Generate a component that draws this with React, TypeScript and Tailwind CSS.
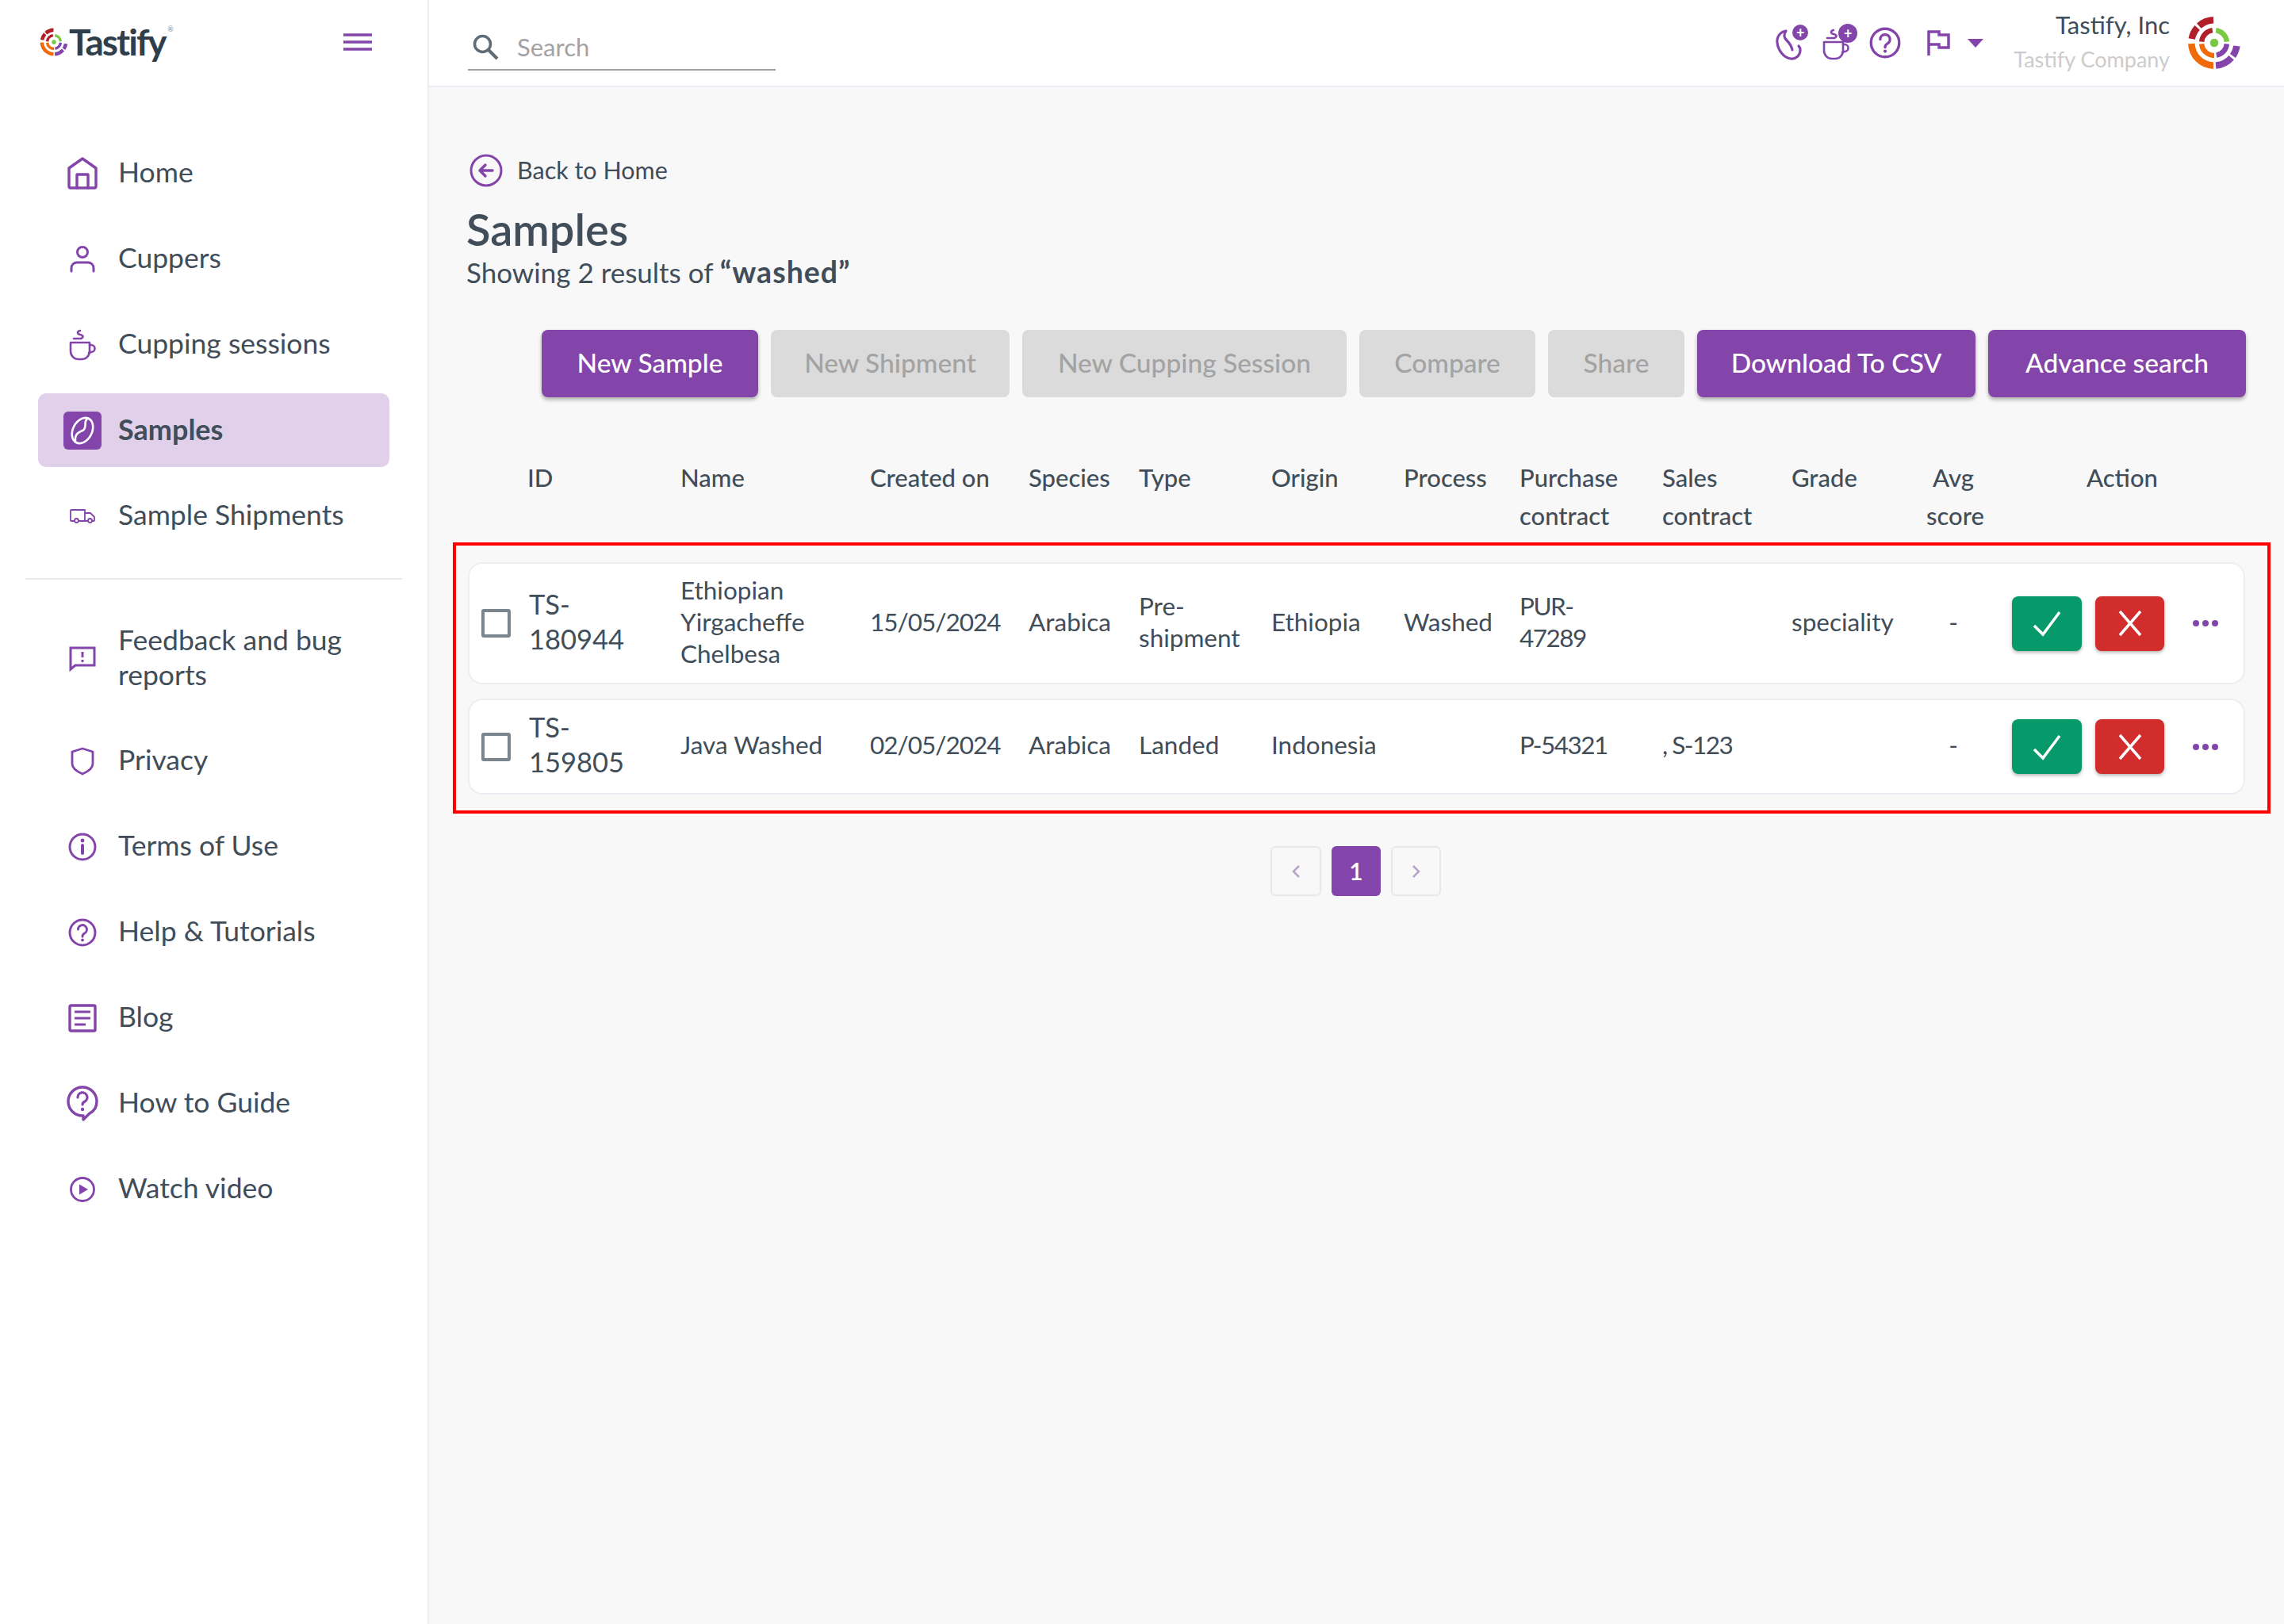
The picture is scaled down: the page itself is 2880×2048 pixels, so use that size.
import React from "react";

const P = "#8445ab";

function arc(cx: number, cy: number, r: number, a0: number, a1: number) {
  const rad = (d: number) => ((d - 90) * Math.PI) / 180;
  const x0 = cx + r * Math.cos(rad(a0));
  const y0 = cy + r * Math.sin(rad(a0));
  const x1 = cx + r * Math.cos(rad(a1));
  const y1 = cy + r * Math.sin(rad(a1));
  return `M${x0} ${y0}A${r} ${r} 0 ${a1 - a0 > 180 ? 1 : 0} 1 ${x1} ${y1}`;
}

function LogoMark({ size }: { size: number }) {
  const segs: [number, number, number, string, number][] = [
    [27, 280, 312, "#b01f2a", 8],
    [27, 318, 358, "#b01f2a", 8],
    [27, 98, 125, "#8445ab", 8],
    [27, 131, 176, "#8445ab", 8],
    [27, 182, 268, "#f06a0a", 8],
    [15, 275, 352, "#b01f2a", 6],
    [15, 8, 85, "#7ac943", 6],
    [15, 95, 170, "#8445ab", 6],
    [15, 180, 265, "#f06a0a", 6],
  ];
  return (
    <svg width={size} height={size} viewBox="0 0 64 64">
      {segs.map((s, i) => (
        <path key={i} d={arc(32, 32, s[0], s[1], s[2])} fill="none" stroke={s[3]} strokeWidth={s[4]} />
      ))}
      <circle cx="32" cy="32" r="5" fill="#7ac943" />
    </svg>
  );
}

const S = { fill: "none", stroke: P, strokeWidth: 2, strokeLinejoin: "round" as const, strokeLinecap: "round" as const };

function IHome() {
  return (
    <svg width="40" height="42" viewBox="0 0 40 42">
      <path {...S} strokeWidth={3.4} d="M20 2 3 14v23a2 2 0 0 0 2 2h30a2 2 0 0 0 2-2V14Z" />
      <path {...S} strokeWidth={3.4} d="M13 39V22h14v17" />
    </svg>
  );
}
function IUser() {
  return (
    <svg width="32" height="34" viewBox="0 0 32 34">
      <circle {...S} strokeWidth={3} cx="16" cy="8" r="6.5" />
      <path {...S} strokeWidth={3} d="M2 32v-4a7 7 0 0 1 7-7h14a7 7 0 0 1 7 7v4" />
    </svg>
  );
}
function ICup() {
  return (
    <svg width="34" height="40" viewBox="0 0 34 40">
      <path {...S} strokeWidth={2.6} d="M2 17h24v11a10 10 0 0 1-10 10h-4A10 10 0 0 1 2 28Z" />
      <path {...S} strokeWidth={2.6} d="M26 20h2a4 4 0 0 1 0 9l-3 1" />
      <path {...S} strokeWidth={2.6} d="M14 2c-4 1-4 4 0 5s5 3 1 5H6" />
    </svg>
  );
}
function IBean() {
  return (
    <svg width="36" height="40" viewBox="0 0 36 40">
      <g transform="rotate(28 18 20)">
        <ellipse cx="18" cy="20" rx="12" ry="17" fill="none" stroke="#fff" strokeWidth="2.600" />
        <path d="M17 3c-5 6 6 11 1 17s-6 10-1 17" fill="none" stroke="#fff" strokeWidth="2.600" />
      </g>
    </svg>
  );
}
function IBeanOpen() {
  return (
    <svg width="36" height="44" viewBox="0 0 36 44">
      <path
        d="M14 4C7 5 2 11 3 19c1 9 8 19 17 20 6 1 12-4 12-11 0-2-1-4-2-5M14 4c-3 5-3 8 1 12 3 3 6 7 7 12"
        fill="none"
        stroke={P}
        strokeWidth="3.200"
        strokeLinecap="round"
      />
    </svg>
  );
}
function ITruck() {
  return (
    <svg width="32" height="18" viewBox="0 0 32 18">
      <path {...S} strokeWidth={1.8} d="M6 15H2a1 1 0 0 1-1-1V2a1 1 0 0 1 1-1h17v14H11M19 5h7l5 5v4a1 1 0 0 1-1 1h-2M23 15h-4" />
      <circle {...S} strokeWidth={1.8} cx="8.5" cy="14.5" r="2.5" />
      <circle {...S} strokeWidth={1.8} cx="25.5" cy="14.5" r="2.5" />
    </svg>
  );
}
function IFeedback() {
  return (
    <svg width="34" height="34" viewBox="0 0 34 34">
      <path {...S} strokeWidth={3} d="M2 3h30v22H8l-6 5Z" strokeLinejoin="miter" />
      <path d="M17 8v7M17 18v3" stroke={P} strokeWidth={3} />
    </svg>
  );
}
function IShield() {
  return (
    <svg width="30" height="36" viewBox="0 0 30 36">
      <path {...S} strokeWidth={2.8} d="M15 2 2 6v15c0 5 6 10 13 13 7-3 13-8 13-13V6Z" />
    </svg>
  );
}
function IInfo() {
  return (
    <svg width="36" height="36" viewBox="0 0 36 36">
      <circle {...S} strokeWidth={3} cx="18" cy="18" r="16" />
      <path d="M18 16v10" stroke={P} strokeWidth={4} strokeLinecap="round" />
      <circle cx="18" cy="10" r="2.4" fill={P} />
    </svg>
  );
}
function IHelp({ s = 36, sw = 3 }: { s?: number; sw?: number }) {
  return (
    <svg width={s} height={s} viewBox="0 0 36 36">
      <circle {...S} strokeWidth={sw} cx="18" cy="18" r="16" />
      <path {...S} strokeWidth={sw} d="M12.5 14a5.5 5.5 0 1 1 8 5c-1.800 1-2.500 2-2.500 4" strokeLinejoin="round" />
      <circle cx="18" cy="27.500" r="1.900" fill={P} />
    </svg>
  );
}
function IBlog() {
  return (
    <svg width="36" height="36" viewBox="0 0 36 36">
      <rect {...S} strokeWidth={3.4} x="2" y="2" width="32" height="32" rx="1.500" />
      <path d="M8 10h20M8 18h20M8 26h14" stroke={P} strokeWidth={3} />
    </svg>
  );
}
function IGuide() {
  return (
    <svg width="40" height="46" viewBox="0 0 40 46">
      <path {...S} strokeWidth={3.4} d="M20 2a18 18 0 1 0 0 36h1l0 5 8-8c6-3 9-9 9-15A18 18 0 0 0 20 2Z" />
      <path {...S} strokeWidth={3.2} d="M14 15a6 6 0 1 1 9 5c-2 1-3 2-3 4" />
      <circle cx="20" cy="30" r="2.200" fill={P} />
    </svg>
  );
}
function IPlay() {
  return (
    <svg width="32" height="34" viewBox="0 0 32 34">
      <circle {...S} strokeWidth={2.8} cx="16" cy="17" r="14.500" />
      <path d="M12 10.500 23 17l-11 6.500Z" fill={P} />
    </svg>
  );
}
function ISearch() {
  return (
    <svg width="36" height="36" viewBox="0 0 36 36">
      <circle cx="14.500" cy="14.500" r="10" fill="none" stroke="#5f6b75" strokeWidth="3.500" />
      <path d="m22 22 11 11" stroke="#5f6b75" strokeWidth="4" />
    </svg>
  );
}
function IBack() {
  return (
    <svg width="42" height="42" viewBox="0 0 42 42">
      <circle {...S} strokeWidth={3} cx="21" cy="21" r="19" />
      <path {...S} strokeWidth={3.400} d="M29 21H14M20 14l-7 7 7 7" />
    </svg>
  );
}
function Plus({ r, top, right }: { r: number; top: number; right: number }) {
  return (
    <span
      className="absolute flex items-center justify-center rounded-full bg-[#8445ab] text-white font-bold text-[18px] leading-none"
      style={{ width: r, height: r, top, right }}
    >
      +
    </span>
  );
}

type Item = { label: React.ReactNode; icon: React.ReactNode; active?: boolean };
const top: Item[] = [
  { label: "Home", icon: <IHome /> },
  { label: "Cuppers", icon: <IUser /> },
  { label: "Cupping sessions", icon: <ICup /> },
  {
    label: "Samples",
    active: true,
    icon: (
      <span className="flex items-center justify-center w-[48px] h-[48px] rounded-[6px] bg-[#8445ab]">
        <IBean />
      </span>
    ),
  },
  { label: "Sample Shipments", icon: <ITruck /> },
];
const bottom: Item[] = [
  { label: "Feedback and bug reports", icon: <IFeedback /> },
  { label: "Privacy", icon: <IShield /> },
  { label: "Terms of Use", icon: <IInfo /> },
  { label: "Help & Tutorials", icon: <IHelp /> },
  { label: "Blog", icon: <IBlog /> },
  { label: "How to Guide", icon: <IGuide /> },
  { label: "Watch video", icon: <IPlay /> },
];

function NavItem({ item }: { item: Item }) {
  return (
    <div
      className={
        "flex items-center w-[443px] ml-[48px] min-h-[93px] py-[21px] mb-[15px] pl-[32px] rounded-[10px] " +
        (item.active ? "bg-[#e0d0ea]" : "")
      }
    >
      <span className="flex items-center justify-center w-[48px] shrink-0">{item.icon}</span>
      <span
        className={
          "ml-[21px] w-[310px] leading-[44px] text-[#414d59] pb-[4px] " +
          (item.active ? "text-[36px] font-bold" : "text-[35.5px]")
        }
      >
        {item.label}
      </span>
    </div>
  );
}

const cols =
  "grid grid-cols-[75px_193px_239px_200px_139px_167px_167px_146px_180px_163px_150px_108px_314px] items-center";

const headers = ["", "ID", "Name", "Created on", "Species", "Type", "Origin", "Process", "Purchase contract", "Sales contract", "Grade"];

type Row = {
  id: string;
  name: string;
  date: string;
  species: string;
  type: string;
  origin: string;
  process: string;
  purchase: string;
  sales: string;
  grade: string;
  h: string;
};
const rows: Row[] = [
  { id: "TS-180944", name: "Ethiopian Yirgacheffe Chelbesa", date: "15/05/2024", species: "Arabica", type: "Pre-shipment", origin: "Ethiopia", process: "Washed", purchase: "PUR-47289", sales: "", grade: "speciality", h: "h-[154px]" },
  { id: "TS-159805", name: "Java Washed", date: "02/05/2024", species: "Arabica", type: "Landed", origin: "Indonesia", process: "", purchase: "P-54321", sales: ", S-123", grade: "", h: "h-[121px]" },
];

function Btn({ w, label, on }: { w: string; label: string; on?: boolean }) {
  return (
    <div
      className={
        "flex items-center justify-center h-[85px] pb-[3px] rounded-[8px] text-[33.5px] font-medium " +
        w +
        (on ? " bg-[#8445ab] text-white shadow-[0_3px_5px_rgba(0,0,0,0.3)]" : " bg-[#dbdbdb] text-[#a3a3a3]")
      }
    >
      {label}
    </div>
  );
}

export default function App() {
  return (
    <div className="flex w-[2880px] min-h-[2048px] bg-[#f8f8f8] text-[#414d59] font-['Lato',sans-serif]">
      <aside className="w-[541px] shrink-0 bg-white border-r-2 border-[#eeeeee]">
        <div className="flex items-center justify-between h-[172px] pl-[50px] pr-[70px] pb-[66px]">
          <div className="flex items-center">
            <LogoMark size={36} />
            <span className="relative ml-[1px] text-[46px] leading-none font-bold tracking-[-2px] text-[#2f3e4a]">
              Tastify
              <span className="absolute top-[2px] right-[-10px] text-[9px] tracking-normal font-normal text-[#888]">®</span>
            </span>
          </div>
          <svg width="36" height="22" viewBox="0 0 36 22">
            <path d="M0 2h36M0 11h36M0 20h36" stroke={P} strokeWidth="3.500" />
          </svg>
        </div>
        {top.map((it, i) => (
          <NavItem key={i} item={it} />
        ))}
        <div className="h-[2px] bg-[#e8e8e8] w-[475px] ml-[32px] mt-[32px] mb-[33px]" />
        {bottom.map((it, i) => (
          <NavItem key={i} item={it} />
        ))}
      </aside>

      <main className="flex-1 min-w-0">
        <header className="flex items-center h-[110px] bg-white border-b-2 border-[#ededf5] pl-[49px] pr-[54px]">
          <div className="flex items-center w-[388px] h-[58px] mt-[12px] border-b-2 border-[#9aa1a8] pl-[4px]">
            <ISearch />
            <span className="ml-[22px] text-[31px] text-[#a3a3a3]">Search</span>
          </div>
          <div className="flex items-center ml-auto">
            <span className="relative flex w-[36px] h-[44px] mr-[24px] mt-[6px]">
              <IBeanOpen />
              <Plus r={20} top={-4} right={-6} />
            </span>
            <span className="relative flex w-[34px] h-[40px] mr-[25px] mt-[4px]">
              <ICup />
              <Plus r={24} top={-6} right={-10} />
            </span>
            <span className="flex mr-[32px]">
              <IHelp s={40} sw={3} />
            </span>
            <svg width="30" height="34" viewBox="0 0 30 34" className="mr-[22px]">
              <path d="M3 33V3h13v4h12v16H16v-4H3" fill="none" stroke={P} strokeWidth="3.500" />
            </svg>
            <span className="w-0 h-0 border-l-[10px] border-r-[10px] border-t-[11px] border-l-transparent border-r-transparent border-t-[#8445ab] mr-[38px]" />
            <div className="flex flex-col items-end">
              <span className="text-[31px] leading-[44px] text-[#414d59]">Tastify, Inc</span>
              <span className="text-[27px] leading-[44px] text-[#cccccc] pb-[3px]">Tastify Company</span>
            </div>
            <span className="ml-[22px] flex">
              <LogoMark size={68} />
            </span>
          </div>
        </header>

        <div className="flex items-center h-[44px] mt-[83px] ml-[51px]">
          <IBack />
          <span className="ml-[18px] text-[30.5px]">Back to Home</span>
        </div>
        <h1 className="ml-[47px] mt-[22px] h-[60px] text-[56px] leading-[60px] font-semibold">Samples</h1>
        <p className="ml-[47px] mt-[2px] h-[44px] text-[35px] leading-[44px]">
          Showing 2 results of <b className="font-bold text-[37.5px] tracking-[1px]">“washed”</b>
        </p>

        <div className="flex gap-[16px] ml-[142px] mt-[51px]">
          <Btn w="w-[273px]" label="New Sample" on />
          <Btn w="w-[301px]" label="New Shipment" />
          <Btn w="w-[409px]" label="New Cupping Session" />
          <Btn w="w-[222px]" label="Compare" />
          <Btn w="w-[172px]" label="Share" />
          <Btn w="w-[351px]" label="Download To CSV" on />
          <Btn w="w-[325px]" label="Advance search" on />
        </div>

        <div className={cols + " items-start ml-[49px] mt-[77px] h-[98px] text-[31px] leading-[48px] font-medium"}>
          {headers.map((h, i) => (
            <div key={i} className="pr-[10px]">
              {h}
            </div>
          ))}
          <div className="text-center px-[20px] leading-[48px]">Avg score</div>
          <div className="text-center pl-[4px]">Action</div>
        </div>

        <div className="ml-[30px] mt-[8px] w-[2292px] border-4 border-[#ff0000] pl-[15px] pr-[28px] pt-[21px] pb-[20px] flex flex-col gap-[18px]">
          {rows.map((r) => (
            <div key={r.id} className={cols + " " + r.h + " bg-white rounded-[18px] shadow-[inset_0_0_0_2px_#ededf3] text-[31.500px] leading-[40px]"}>
              <div className="pl-[17px]">
                <span className="block w-[37px] h-[36px] border-[4px] border-[#7b858d] rounded-[3px]" />
              </div>
              <div className="text-[34.5px] leading-[44px] w-[130px] pb-[5px] pl-[2px]">{r.id}</div>
              <div className="pr-[30px] pb-[5px]">{r.name}</div>
              <div className="pb-[5px] tracking-[-1px]">{r.date}</div>
              <div className="pb-[5px]">{r.species}</div>
              <div className="pr-[20px] pb-[5px]">{r.type}</div>
              <div className="pb-[5px]">{r.origin}</div>
              <div className="pb-[5px]">{r.process}</div>
              <div className="w-[120px] pb-[5px] tracking-[-1.5px]">{r.purchase}</div>
              <div className="pb-[5px] tracking-[-1.5px]">{r.sales}</div>
              <div className="pb-[5px]">{r.grade}</div>
              <div className="text-center pb-[5px]">-</div>
              <div className="flex items-center pl-[20px]">
                <span className="flex items-center justify-center w-[88px] h-[69px] rounded-[8px] bg-[#069a6b] shadow-[0_2px_4px_rgba(0,0,0,0.3)]">
                  <svg width="36" height="34" viewBox="0 0 36 34">
                    <path d="M2 20l11 11L34 3" fill="none" stroke="#fff" strokeWidth="3.500" />
                  </svg>
                </span>
                <span className="flex items-center justify-center w-[87px] h-[69px] ml-[17px] rounded-[8px] bg-[#d12d2d] shadow-[0_2px_4px_rgba(0,0,0,0.3)]">
                  <svg width="30" height="34" viewBox="0 0 30 34">
                    <path d="M2 2l26 30M28 2 2 32" fill="none" stroke="#fff" strokeWidth="3.500" />
                  </svg>
                </span>
                <span className="flex items-center justify-between w-[32px] ml-[36px]">
                  <i className="block w-[8px] h-[8px] rounded-full bg-[#8445ab]" />
                  <i className="block w-[8px] h-[8px] rounded-full bg-[#8445ab]" />
                  <i className="block w-[8px] h-[8px] rounded-full bg-[#8445ab]" />
                </span>
              </div>
            </div>
          ))}
        </div>

        <div className="flex justify-center gap-[13px] mt-[41px] pr-[2px]">
          <span className="flex items-center justify-center w-[64px] h-[63px] rounded-[6px] bg-[#f8f8f8] shadow-[inset_0_0_0_2px_#e8e8e8]">
            <svg width="14" height="20" viewBox="0 0 14 20">
              <path d="M11 3 4 10l7 7" fill="none" stroke="#b9a4c9" strokeWidth="2.500" />
            </svg>
          </span>
          <span className="flex items-center justify-center w-[62px] h-[63px] rounded-[6px] bg-[#8445ab] text-white text-[30px] font-semibold">1</span>
          <span className="flex items-center justify-center w-[63px] h-[63px] rounded-[6px] bg-[#f8f8f8] shadow-[inset_0_0_0_2px_#e8e8e8]">
            <svg width="14" height="20" viewBox="0 0 14 20">
              <path d="m3 3 7 7-7 7" fill="none" stroke="#b9a4c9" strokeWidth="2.500" />
            </svg>
          </span>
        </div>
      </main>
    </div>
  );
}
